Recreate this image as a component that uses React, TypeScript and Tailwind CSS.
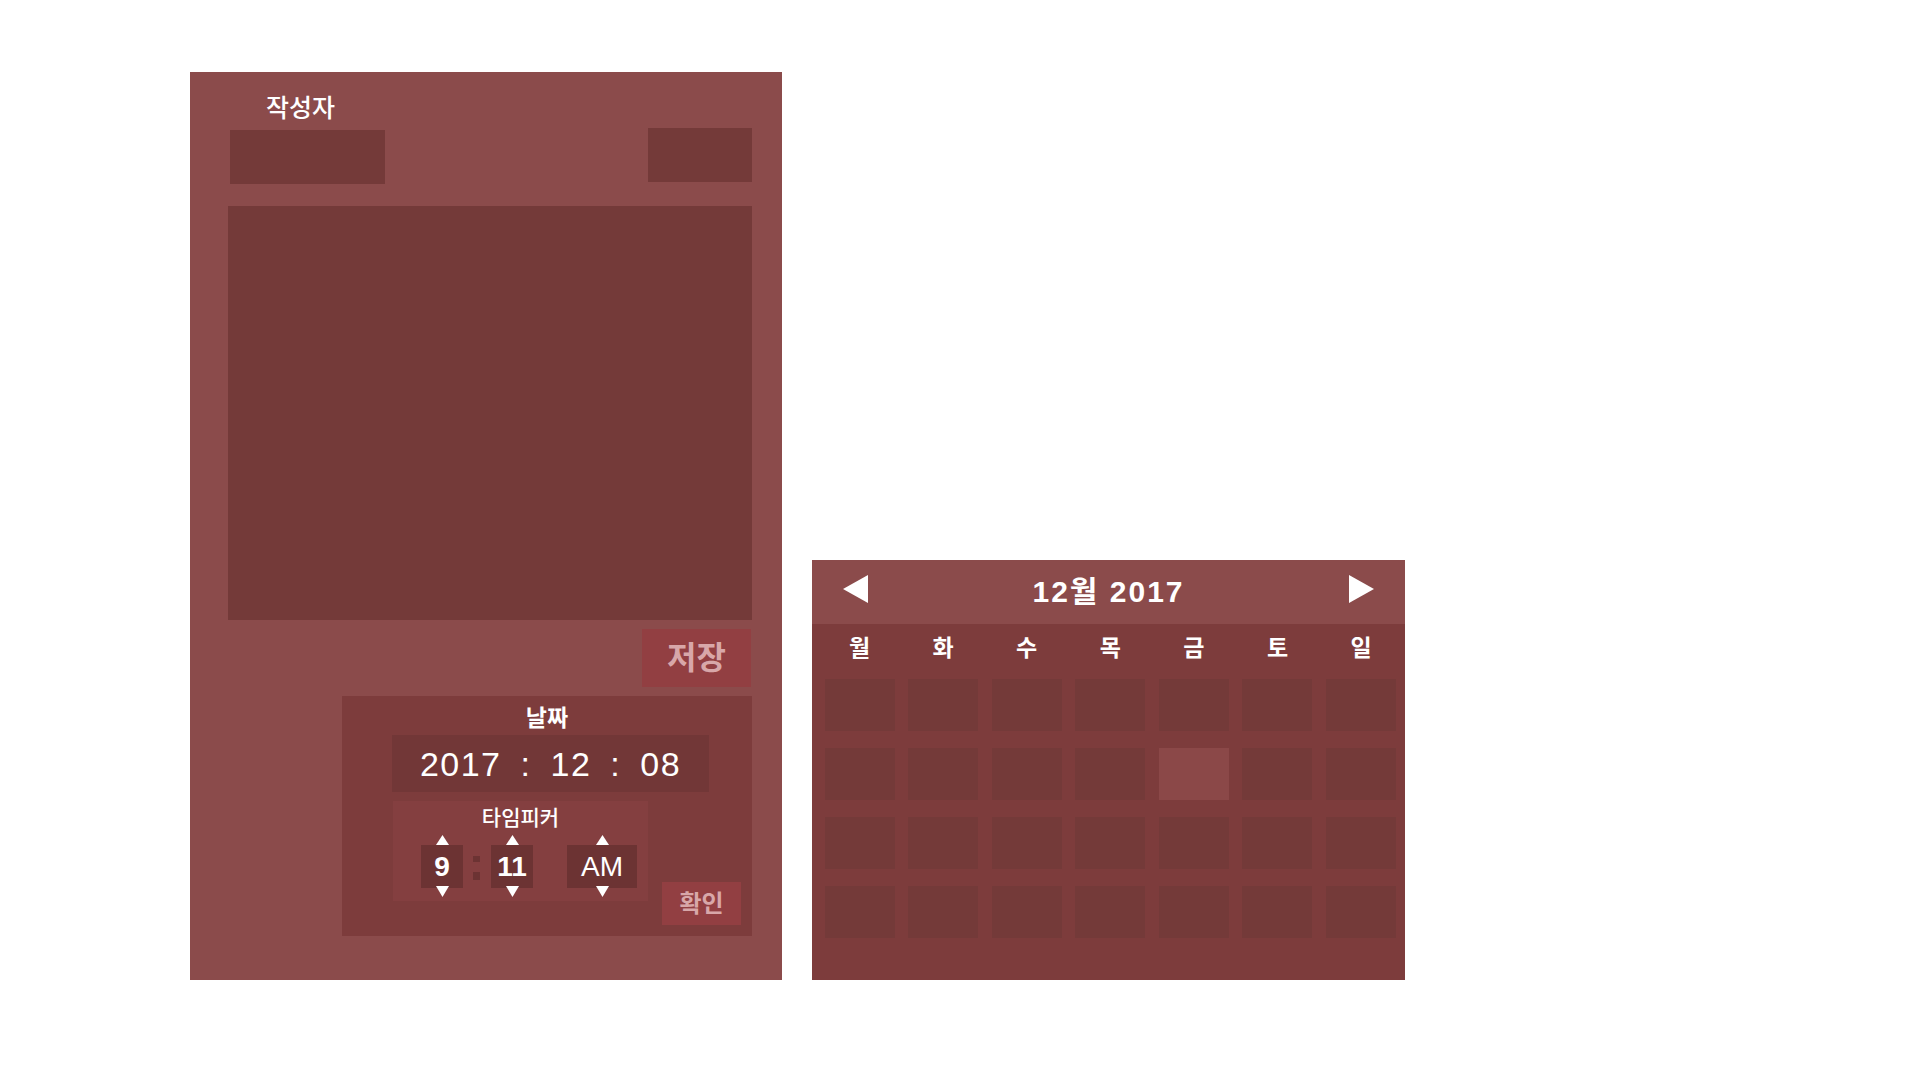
import React from 'react';

const font = "font-['Liberation_Sans','Noto_Sans_CJK_KR',sans-serif]";

function Triangle({ dir, className }: { dir: 'up' | 'down' | 'left' | 'right'; className: string }) {
  const points = {
    up: '50,0 100,100 0,100',
    down: '0,0 100,0 50,100',
    left: '0,50 100,0 100,100',
    right: '0,0 100,50 0,100',
  }[dir];
  return (
    <svg viewBox="0 0 100 100" preserveAspectRatio="none" className={className}>
      <polygon points={points} fill="#ffffff" />
    </svg>
  );
}

function Spinner({ value, width, bold }: { value: string; width: string; bold?: boolean }) {
  return (
    <div className={`flex flex-col items-center ${width}`}>
      <Triangle dir="up" className="w-[13px] h-[10px]" />
      <div
        className={`w-full h-[43px] bg-[#6c3333] flex items-center justify-center text-white text-[28px] leading-none ${
          bold ? 'font-bold' : 'font-normal'
        }`}
      >
        {value}
      </div>
      <Triangle dir="down" className="w-[13px] h-[11px] -mt-[2px]" />
    </div>
  );
}

function EditorPanel() {
  return (
    <div className="w-[592px] h-[908px] bg-[#8b4b4b] flex flex-col">
      {/* author */}
      <div className="pl-[76px] pt-[21px] text-[25px] leading-[30px] font-medium text-white">작성자</div>
      <div className="flex justify-between items-start pl-[40px] pr-[30px] mt-[5px]">
        <div className="w-[155px] h-[54px] mt-[2px] bg-[#743a39]" />
        <div className="w-[104px] h-[54px] bg-[#743a39]" />
      </div>

      {/* body */}
      <div className="ml-[38px] mr-[30px] mt-[22px] h-[414px] bg-[#743a39]" />

      <button className="self-end mr-[31px] mt-[9px] w-[109px] h-[58px] bg-[#923f42] text-[#d8a7a9] text-[32px] font-bold leading-none">
        저장
      </button>

      {/* date picker */}
      <div className="self-end mr-[30px] mt-[9px] w-[410px] h-[240px] bg-[#7d3c3c] flex flex-col">
        <div className="pt-[8px] text-center text-[23px] leading-[28px] font-bold text-white">날짜</div>
        <div className="ml-[50px] mt-[3px] w-[317px] h-[57px] bg-[#723737] flex items-center justify-center gap-[19px] text-white text-[34px] leading-none tracking-[1.5px]">
          <span>2017</span>
          <span>:</span>
          <span>12</span>
          <span>:</span>
          <span>08</span>
        </div>
        <div className="flex items-start mt-[9px]">
          <div className="ml-[51px] w-[255px] h-[100px] bg-[#843f40] flex flex-col">
            <div className="pt-[4px] text-center text-[21px] leading-[25px] font-medium text-white">타임피커</div>
            <div className="flex items-start pl-[28px] mt-[5px]">
              <Spinner value="9" width="w-[42px]" bold />
              <div className="ml-[10px] mt-[21px] w-[7px] flex flex-col gap-[10px]">
                <div className="h-[6px] bg-[#6c3333]" />
                <div className="h-[8px] bg-[#6c3333]" />
              </div>
              <Spinner value="11" width="ml-[11px] w-[42px]" bold />
              <Spinner value="AM" width="ml-[34px] w-[70px]" />
            </div>
          </div>
          <button className="ml-[14px] mt-[81px] w-[79px] h-[43px] bg-[#923f42] text-[#d8a7a9] text-[24px] font-bold leading-none">
            확인
          </button>
        </div>
      </div>
    </div>
  );
}

function CalendarPanel() {
  const days = ['월', '화', '수', '목', '금', '토', '일'];
  const cells = Array.from({ length: 28 }, (_, i) => i);

  return (
    <div className="w-[593px] h-[420px] bg-[#7d3c3c] flex flex-col">
      {/* month header */}
      <div className="h-[64px] bg-[#8b4b4b] flex items-center justify-between pl-[31px] pr-[31px]">
        <Triangle dir="left" className="w-[25px] h-[28px] -mt-[6px]" />
        <div className="text-white text-[30px] font-bold leading-none tracking-[2px] -mt-[1px]">12월 2017</div>
        <Triangle dir="right" className="w-[25px] h-[28px] -mt-[6px]" />
      </div>

      {/* weekdays */}
      <div className="grid grid-cols-[repeat(7,70px)] gap-x-[13.6px] pl-[12.5px] h-[48px] items-center">
        {days.map((d) => (
          <div key={d} className="text-center text-white text-[23px] font-bold leading-none">
            {d}
          </div>
        ))}
      </div>

      {/* day cells */}
      <div className="grid grid-cols-[repeat(7,70px)] gap-x-[13.6px] gap-y-[17px] pl-[12.5px] mt-[7px]">
        {cells.map((i) => (
          <div key={i} className={`h-[52px] ${i === 11 ? 'bg-[#8b4848]' : 'bg-[#743a39]'}`} />
        ))}
      </div>
    </div>
  );
}

export default function App() {
  return (
    <div className={`min-h-screen bg-white ${font}`}>
      <div className="flex items-end gap-[30px] pl-[190px] pt-[72px]">
        <EditorPanel />
        <CalendarPanel />
      </div>
    </div>
  );
}
